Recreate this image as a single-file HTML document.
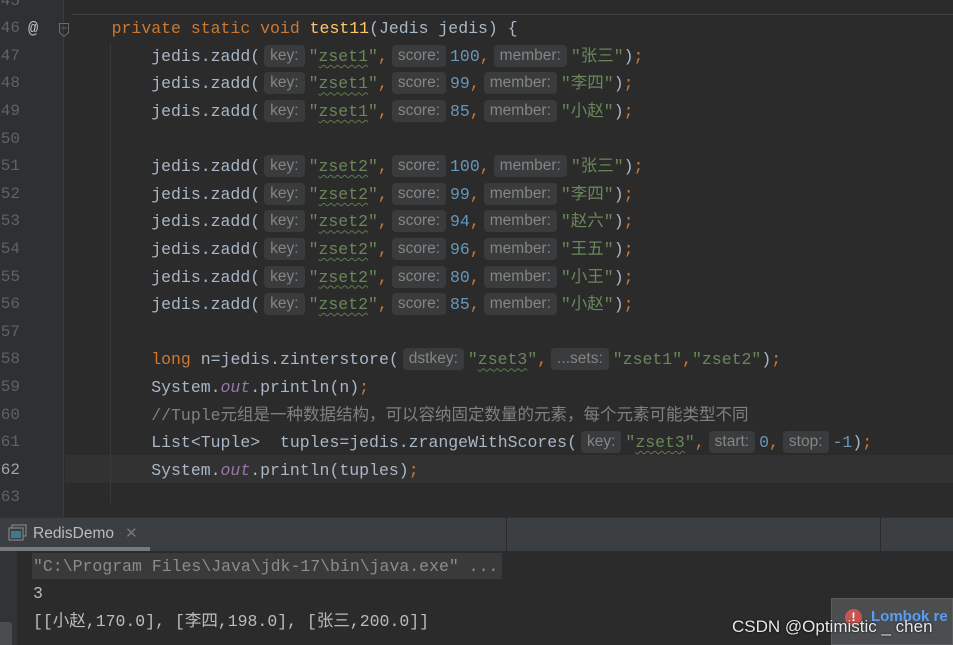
<!DOCTYPE html>
<html><head><meta charset="utf-8"><style>
*{margin:0;padding:0;box-sizing:border-box}
body{width:953px;height:645px;overflow:hidden;background:#2b2b2b;position:relative;font-family:"Liberation Mono","Noto Sans CJK SC",monospace;font-size:16.5px;color:#a9b7c6}
.gut{position:absolute;left:0;top:0;width:64px;height:517px;background:#2e3032;border-right:1px solid #3a3a3a}
.ln{position:absolute;left:-6px;width:26px;text-align:right;color:#5f6366;font-size:16px;height:27.6px;line-height:27.6px}
.l{position:absolute;left:72px;height:27.6px;line-height:27.6px;white-space:pre}
.k{color:#cc7832}.m{color:#ffc66d}.s{color:#6a8759}.n{color:#6897bb}.c{color:#808080}.o{color:#9876aa;font-style:italic}
.u{text-decoration:underline wavy #5d7a4a;text-underline-offset:3px;text-decoration-thickness:1px}
.h{display:inline-block;background:#3a3b3c;color:#858585;font-family:"Liberation Sans",sans-serif;font-size:15.5px;line-height:22px;padding:0 6px;border-radius:4px;margin:0 4px 0 4px;vertical-align:1px}
</style></head><body>
<div class="gut"></div>
<div style="position:absolute;left:65px;top:455px;width:888px;height:28px;background:#323232"></div>
<div style="position:absolute;left:72px;top:14px;width:881px;height:1px;background:#3d3f41"></div>
<div style="position:absolute;left:110px;top:43px;width:1px;height:460px;background:#393939"></div>
<div style="position:absolute;left:28px;top:16px;color:#c0c0c0;font-size:17px;line-height:27px">@</div>
<svg style="position:absolute;left:58px;top:22px" width="12" height="16"><path d="M1.5 1.5h9v9l-4.5 4-4.5-4z" fill="none" stroke="#6a6a6a"/><path d="M3.5 6h5" stroke="#6a6a6a"/></svg>

<div class="ln" style="top:-12.4px">45</div>
<div class="ln" style="top:15.2px">46</div>
<div class="ln" style="top:42.8px">47</div>
<div class="ln" style="top:70.4px">48</div>
<div class="ln" style="top:98px">49</div>
<div class="ln" style="top:125.6px">50</div>
<div class="ln" style="top:153.2px">51</div>
<div class="ln" style="top:180.8px">52</div>
<div class="ln" style="top:208.4px">53</div>
<div class="ln" style="top:236px">54</div>
<div class="ln" style="top:263.6px">55</div>
<div class="ln" style="top:291.2px">56</div>
<div class="ln" style="top:318.8px">57</div>
<div class="ln" style="top:346.4px">58</div>
<div class="ln" style="top:374px">59</div>
<div class="ln" style="top:401.6px">60</div>
<div class="ln" style="top:429.2px">61</div>
<div class="ln" style="top:456.8px;color:#a4a3a3">62</div>
<div class="ln" style="top:484.4px">63</div>

<div class="l" style="top:15.2px">    <span class="k">private static void </span><span class="m">test11</span>(Jedis jedis) {</div>
<div class="l" style="top:42.8px">        jedis.zadd(<span class="h">key:</span><span class="s">"<span class="u">zset1</span>"</span><span class="k">,</span><span class="h">score:</span><span class="n">100</span><span class="k">,</span><span class="h">member:</span><span class="s">"张三"</span>)<span class="k">;</span></div>
<div class="l" style="top:70.4px">        jedis.zadd(<span class="h">key:</span><span class="s">"<span class="u">zset1</span>"</span><span class="k">,</span><span class="h">score:</span><span class="n">99</span><span class="k">,</span><span class="h">member:</span><span class="s">"李四"</span>)<span class="k">;</span></div>
<div class="l" style="top:98px">        jedis.zadd(<span class="h">key:</span><span class="s">"<span class="u">zset1</span>"</span><span class="k">,</span><span class="h">score:</span><span class="n">85</span><span class="k">,</span><span class="h">member:</span><span class="s">"小赵"</span>)<span class="k">;</span></div>
<div class="l" style="top:153.2px">        jedis.zadd(<span class="h">key:</span><span class="s">"<span class="u">zset2</span>"</span><span class="k">,</span><span class="h">score:</span><span class="n">100</span><span class="k">,</span><span class="h">member:</span><span class="s">"张三"</span>)<span class="k">;</span></div>
<div class="l" style="top:180.8px">        jedis.zadd(<span class="h">key:</span><span class="s">"<span class="u">zset2</span>"</span><span class="k">,</span><span class="h">score:</span><span class="n">99</span><span class="k">,</span><span class="h">member:</span><span class="s">"李四"</span>)<span class="k">;</span></div>
<div class="l" style="top:208.4px">        jedis.zadd(<span class="h">key:</span><span class="s">"<span class="u">zset2</span>"</span><span class="k">,</span><span class="h">score:</span><span class="n">94</span><span class="k">,</span><span class="h">member:</span><span class="s">"赵六"</span>)<span class="k">;</span></div>
<div class="l" style="top:236px">        jedis.zadd(<span class="h">key:</span><span class="s">"<span class="u">zset2</span>"</span><span class="k">,</span><span class="h">score:</span><span class="n">96</span><span class="k">,</span><span class="h">member:</span><span class="s">"王五"</span>)<span class="k">;</span></div>
<div class="l" style="top:263.6px">        jedis.zadd(<span class="h">key:</span><span class="s">"<span class="u">zset2</span>"</span><span class="k">,</span><span class="h">score:</span><span class="n">80</span><span class="k">,</span><span class="h">member:</span><span class="s">"小王"</span>)<span class="k">;</span></div>
<div class="l" style="top:291.2px">        jedis.zadd(<span class="h">key:</span><span class="s">"<span class="u">zset2</span>"</span><span class="k">,</span><span class="h">score:</span><span class="n">85</span><span class="k">,</span><span class="h">member:</span><span class="s">"小赵"</span>)<span class="k">;</span></div>
<div class="l" style="top:346.4px">        <span class="k">long </span>n=jedis.zinterstore(<span class="h">dstkey:</span><span class="s">"<span class="u">zset3</span>"</span><span class="k">,</span><span class="h">...sets:</span><span class="s">"zset1"</span><span class="k">,</span><span class="s">"zset2"</span>)<span class="k">;</span></div>
<div class="l" style="top:374px">        System.<span class="o">out</span>.println(n)<span class="k">;</span></div>
<div class="l c" style="top:401.6px">        //Tuple元组是一种数据结构，可以容纳固定数量的元素，每个元素可能类型不同</div>
<div class="l" style="top:429.2px">        List&lt;Tuple&gt;  tuples=jedis.zrangeWithScores(<span class="h">key:</span><span class="s">"<span class="u">zset3</span>"</span><span class="k">,</span><span class="h">start:</span><span class="n">0</span><span class="k">,</span><span class="h">stop:</span><span class="n">-1</span>)<span class="k">;</span></div>
<div class="l" style="top:456.8px">        System.<span class="o">out</span>.println(tuples)<span class="k">;</span></div>

<div style="position:absolute;left:0;top:517px;width:953px;height:34px;background:#3c3f41;border-top:1px solid #323232"></div>
<div style="position:absolute;left:506px;top:517px;width:1px;height:34px;background:#2b2b2b"></div>
<div style="position:absolute;left:880px;top:517px;width:1px;height:34px;background:#2b2b2b"></div>
<div style="position:absolute;left:0;top:547px;width:150px;height:4px;background:#747a80"></div>
<svg style="position:absolute;left:8px;top:524px" width="20" height="18"><rect x="4" y="1" width="14" height="11" fill="none" stroke="#8a8f94"/><rect x="1" y="4" width="14" height="12" fill="#3c3f41" stroke="#8a8f94"/><rect x="3" y="7" width="10" height="7" fill="#3e7a91"/></svg>
<div style="position:absolute;left:33px;top:523px;font-family:'Liberation Sans',sans-serif;font-size:15.5px;color:#bbbbbb;line-height:22px">RedisDemo</div>
<div style="position:absolute;left:125px;top:523px;font-family:'Liberation Sans',sans-serif;font-size:15px;color:#777;line-height:22px">✕</div>
<div style="position:absolute;left:0;top:551px;width:17px;height:94px;background:#313335"></div>
<div style="position:absolute;left:0;top:622px;width:12px;height:23px;background:#4a4d50;border-radius:0 3px 0 0"></div>
<div style="position:absolute;left:32px;top:553px;width:470px;height:26px;background:#3a3a3a"></div>
<div style="position:absolute;left:33px;top:553px;line-height:27px;color:#8c8c8c;white-space:pre">"C:\Program Files\Java\jdk-17\bin\java.exe" ...</div>
<div style="position:absolute;left:33px;top:580px;line-height:27px;color:#bbbbbb">3</div>
<div style="position:absolute;left:33px;top:607.5px;line-height:27px;color:#bbbbbb;white-space:pre">[[小赵,170.0], [李四,198.0], [张三,200.0]]</div>

<div style="position:absolute;left:831px;top:598px;width:122px;height:47px;background:#4b4d4f;border:1px solid #5a5c5e"></div>
<div style="position:absolute;left:845px;top:609px;width:17px;height:17px;border-radius:50%;background:#c75450;color:#fff;font:bold 12px 'Liberation Sans';text-align:center;line-height:17px">!</div>
<div style="position:absolute;left:871px;top:608px;font:bold 15px 'Liberation Sans',sans-serif;color:#589df6;white-space:nowrap">Lombok re</div>
<div style="position:absolute;left:732px;top:617px;font:17px 'Liberation Sans','Noto Sans CJK SC',sans-serif;color:#e8e8e8;white-space:nowrap;text-shadow:0 0 2px #000">CSDN @Optimistic _ chen</div>
</body></html>
